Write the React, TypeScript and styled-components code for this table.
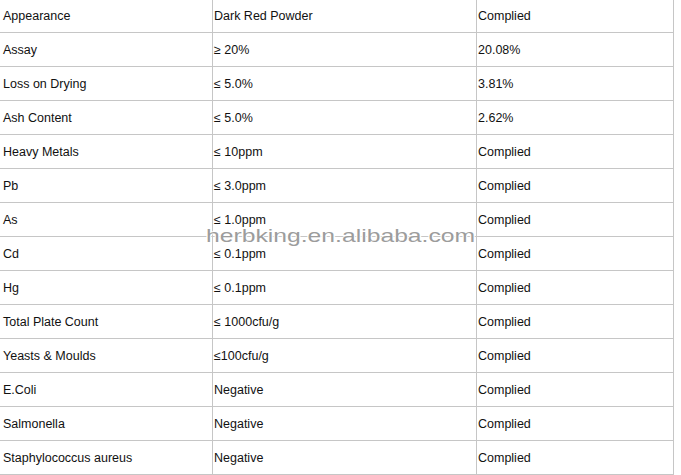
import styled, { createGlobalStyle } from "styled-components";

const GlobalStyle = createGlobalStyle`
  html, body {
    margin: 0;
    padding: 0;
    background: #ffffff;
    overflow: hidden;
  }
  body {
    font-family: "Liberation Sans", Arial, sans-serif;
  }
`;

const Page = styled.div`
  position: relative;
  width: 681px;
  height: 475px;
  overflow: hidden;
`;

const Sheet = styled.div`
  display: grid;
  grid-template-columns: 212px 263px 196px;
  grid-auto-rows: 33px;
  gap: 1px;
  padding: 1px;
  width: max-content;
  margin: -2px 0 0 -1px;
  background: #c6c6c6;
`;

const Cell = styled.div<{ $first?: boolean }>`
  display: flex;
  align-items: center;
  padding-left: ${(p) => (p.$first ? "3px" : "1px")};
  background: #ffffff;
  color: #111111;
  font-size: 12.5px;
  white-space: nowrap;
`;

// watermark laid over the table, stretched wide like the original
const Watermark = styled.span`
  position: absolute;
  left: 206px;
  top: 226px;
  font-family: "Liberation Sans", Arial, sans-serif;
  font-size: 19px;
  line-height: 19px;
  color: #9c9c9c;
  transform: scaleX(1.3);
  transform-origin: left center;
  text-shadow: 1px 0 0 #fff, -1px 0 0 #fff, 0 1px 0 #fff, 0 -1px 0 #fff;
  pointer-events: none;
`;

const rows: [string, string, string][] = [
  ["Appearance", "Dark Red Powder", "Complied"],
  ["Assay", "≥ 20%", "20.08%"],
  ["Loss on Drying", "≤ 5.0%", "3.81%"],
  ["Ash Content", "≤ 5.0%", "2.62%"],
  ["Heavy Metals", "≤ 10ppm", "Complied"],
  ["Pb", "≤ 3.0ppm", "Complied"],
  ["As", "≤ 1.0ppm", "Complied"],
  ["Cd", "≤ 0.1ppm", "Complied"],
  ["Hg", "≤ 0.1ppm", "Complied"],
  ["Total Plate Count", "≤ 1000cfu/g", "Complied"],
  ["Yeasts & Moulds", "≤100cfu/g", "Complied"],
  ["E.Coli", "Negative", "Complied"],
  ["Salmonella", "Negative", "Complied"],
  ["Staphylococcus aureus", "Negative", "Complied"],
];

function App() {
  return (
    <>
      <GlobalStyle />
      <Page>
        <Sheet>
          {rows.map((row) =>
            row.map((text, i) => (
              <Cell key={row[0] + i} $first={i === 0}>
                {text}
              </Cell>
            ))
          )}
        </Sheet>
        <Watermark>herbking.en.alibaba.com</Watermark>
      </Page>
    </>
  );
}

export default App;
